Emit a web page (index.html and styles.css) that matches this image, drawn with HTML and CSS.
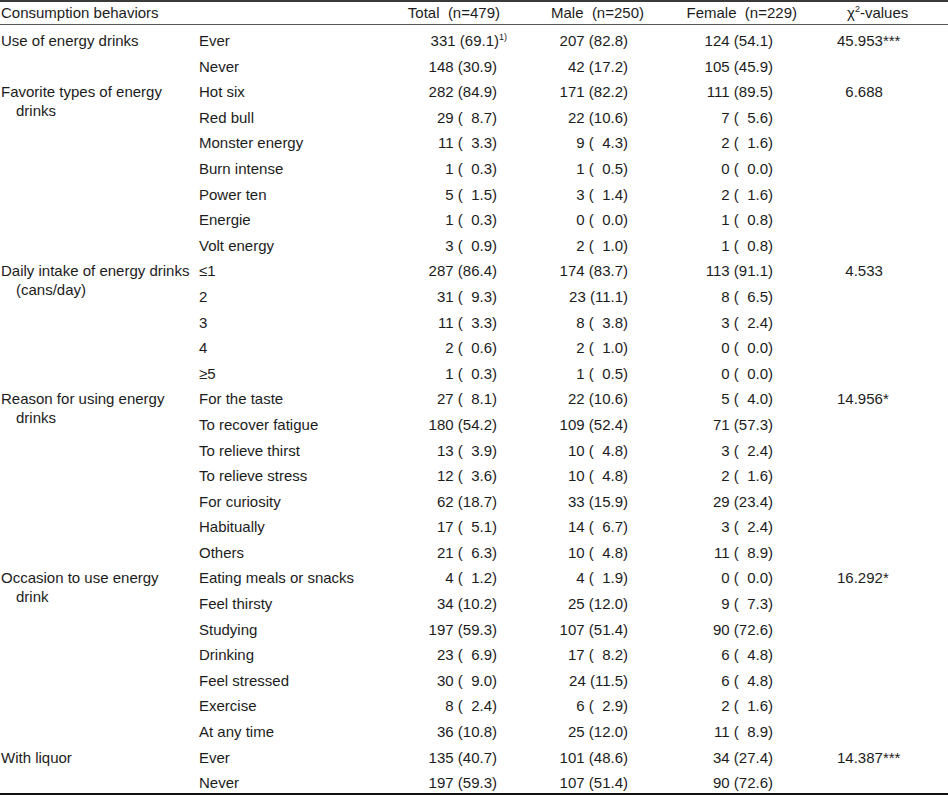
FILE: index.html
```html
<!DOCTYPE html>
<html>
<head>
<meta charset="utf-8">
<link rel="stylesheet" href="styles.css">
</head>
<body>
<table class="tbl">
  <colgroup>
    <col class="c-label"><col class="c-sub"><col class="c-total"><col class="c-male"><col class="c-female"><col class="c-chi">
  </colgroup>
  <thead>
    <tr>
      <th class="h-left" colspan="2">Consumption behaviors</th>
      <th class="h-num h-total">Total&nbsp; (n=479)</th>
      <th class="h-num h-male">Male&nbsp; (n=250)</th>
      <th class="h-num h-female">Female&nbsp; (n=229)</th>
      <th class="h-num h-chi">χ<sup class="sq">2</sup>-values</th>
    </tr>
  </thead>
  <tbody>
    <tr><td class="lab" rowspan="2">Use of energy drinks</td><td class="sub">Ever</td><td class="n t">331 (69.1)<sup class="fn">1)</sup></td><td class="n m">207 (82.8)</td><td class="n f">124 (54.1)</td><td class="chi">45.953***</td></tr>
    <tr class="last"><td class="sub">Never</td><td class="n t">148 (30.9)</td><td class="n m">42 (17.2)</td><td class="n f">105 (45.9)</td><td class="chi"></td></tr>

    <tr><td class="lab" rowspan="7">Favorite types of energy drinks</td><td class="sub">Hot six</td><td class="n t">282 (84.9)</td><td class="n m">171 (82.2)</td><td class="n f">111 (89.5)</td><td class="chi">&#8199;6.688</td></tr>
    <tr><td class="sub">Red bull</td><td class="n t">29 (&#8199;8.7)</td><td class="n m">22 (10.6)</td><td class="n f">7 (&#8199;5.6)</td><td class="chi"></td></tr>
    <tr><td class="sub">Monster energy</td><td class="n t">11 (&#8199;3.3)</td><td class="n m">9 (&#8199;4.3)</td><td class="n f">2 (&#8199;1.6)</td><td class="chi"></td></tr>
    <tr><td class="sub">Burn intense</td><td class="n t">1 (&#8199;0.3)</td><td class="n m">1 (&#8199;0.5)</td><td class="n f">0 (&#8199;0.0)</td><td class="chi"></td></tr>
    <tr><td class="sub">Power ten</td><td class="n t">5 (&#8199;1.5)</td><td class="n m">3 (&#8199;1.4)</td><td class="n f">2 (&#8199;1.6)</td><td class="chi"></td></tr>
    <tr><td class="sub">Energie</td><td class="n t">1 (&#8199;0.3)</td><td class="n m">0 (&#8199;0.0)</td><td class="n f">1 (&#8199;0.8)</td><td class="chi"></td></tr>
    <tr><td class="sub">Volt energy</td><td class="n t">3 (&#8199;0.9)</td><td class="n m">2 (&#8199;1.0)</td><td class="n f">1 (&#8199;0.8)</td><td class="chi"></td></tr>

    <tr><td class="lab" rowspan="5">Daily intake of energy drinks (cans/day)</td><td class="sub">≤1</td><td class="n t">287 (86.4)</td><td class="n m">174 (83.7)</td><td class="n f">113 (91.1)</td><td class="chi">&#8199;4.533</td></tr>
    <tr><td class="sub">2</td><td class="n t">31 (&#8199;9.3)</td><td class="n m">23 (11.1)</td><td class="n f">8 (&#8199;6.5)</td><td class="chi"></td></tr>
    <tr><td class="sub">3</td><td class="n t">11 (&#8199;3.3)</td><td class="n m">8 (&#8199;3.8)</td><td class="n f">3 (&#8199;2.4)</td><td class="chi"></td></tr>
    <tr><td class="sub">4</td><td class="n t">2 (&#8199;0.6)</td><td class="n m">2 (&#8199;1.0)</td><td class="n f">0 (&#8199;0.0)</td><td class="chi"></td></tr>
    <tr><td class="sub">≥5</td><td class="n t">1 (&#8199;0.3)</td><td class="n m">1 (&#8199;0.5)</td><td class="n f">0 (&#8199;0.0)</td><td class="chi"></td></tr>

    <tr><td class="lab" rowspan="7">Reason for using energy drinks</td><td class="sub">For the taste</td><td class="n t">27 (&#8199;8.1)</td><td class="n m">22 (10.6)</td><td class="n f">5 (&#8199;4.0)</td><td class="chi">14.956*</td></tr>
    <tr><td class="sub">To recover fatigue</td><td class="n t">180 (54.2)</td><td class="n m">109 (52.4)</td><td class="n f">71 (57.3)</td><td class="chi"></td></tr>
    <tr><td class="sub">To relieve thirst</td><td class="n t">13 (&#8199;3.9)</td><td class="n m">10 (&#8199;4.8)</td><td class="n f">3 (&#8199;2.4)</td><td class="chi"></td></tr>
    <tr><td class="sub">To relieve stress</td><td class="n t">12 (&#8199;3.6)</td><td class="n m">10 (&#8199;4.8)</td><td class="n f">2 (&#8199;1.6)</td><td class="chi"></td></tr>
    <tr><td class="sub">For curiosity</td><td class="n t">62 (18.7)</td><td class="n m">33 (15.9)</td><td class="n f">29 (23.4)</td><td class="chi"></td></tr>
    <tr><td class="sub">Habitually</td><td class="n t">17 (&#8199;5.1)</td><td class="n m">14 (&#8199;6.7)</td><td class="n f">3 (&#8199;2.4)</td><td class="chi"></td></tr>
    <tr><td class="sub">Others</td><td class="n t">21 (&#8199;6.3)</td><td class="n m">10 (&#8199;4.8)</td><td class="n f">11 (&#8199;8.9)</td><td class="chi"></td></tr>

    <tr><td class="lab" rowspan="7">Occasion to use energy drink</td><td class="sub">Eating meals or snacks</td><td class="n t">4 (&#8199;1.2)</td><td class="n m">4 (&#8199;1.9)</td><td class="n f">0 (&#8199;0.0)</td><td class="chi">16.292*</td></tr>
    <tr><td class="sub">Feel thirsty</td><td class="n t">34 (10.2)</td><td class="n m">25 (12.0)</td><td class="n f">9 (&#8199;7.3)</td><td class="chi"></td></tr>
    <tr><td class="sub">Studying</td><td class="n t">197 (59.3)</td><td class="n m">107 (51.4)</td><td class="n f">90 (72.6)</td><td class="chi"></td></tr>
    <tr><td class="sub">Drinking</td><td class="n t">23 (&#8199;6.9)</td><td class="n m">17 (&#8199;8.2)</td><td class="n f">6 (&#8199;4.8)</td><td class="chi"></td></tr>
    <tr><td class="sub">Feel stressed</td><td class="n t">30 (&#8199;9.0)</td><td class="n m">24 (11.5)</td><td class="n f">6 (&#8199;4.8)</td><td class="chi"></td></tr>
    <tr><td class="sub">Exercise</td><td class="n t">8 (&#8199;2.4)</td><td class="n m">6 (&#8199;2.9)</td><td class="n f">2 (&#8199;1.6)</td><td class="chi"></td></tr>
    <tr><td class="sub">At any time</td><td class="n t">36 (10.8)</td><td class="n m">25 (12.0)</td><td class="n f">11 (&#8199;8.9)</td><td class="chi"></td></tr>

    <tr><td class="lab" rowspan="2">With liquor</td><td class="sub">Ever</td><td class="n t">135 (40.7)</td><td class="n m">101 (48.6)</td><td class="n f">34 (27.4)</td><td class="chi">14.387***</td></tr>
    <tr><td class="sub">Never</td><td class="n t">197 (59.3)</td><td class="n m">107 (51.4)</td><td class="n f">90 (72.6)</td><td class="chi"></td></tr>
  </tbody>
</table>
</body>
</html>
```

FILE: styles.css
```css
html, body {
  margin: 0;
  padding: 0;
  background: #ffffff;
}

.tbl {
  width: 948px;
  table-layout: fixed;
  border-collapse: collapse;
  font-family: "Liberation Sans", Arial, sans-serif;
  font-size: 15px;
  color: #1c1c1c;
  border-top: 2px solid #3a3a3a;
  border-bottom: 2px solid #111111;
}

.c-label { width: 197px; }
.c-sub { width: 183px; }
.c-total { width: 140px; }
.c-male { width: 145px; }
.c-female { width: 140px; }
.c-chi { width: 143px; }

.tbl th {
  font-weight: normal;
  height: 22px;
  padding: 0;
  line-height: 22px;
  vertical-align: middle;
  border-bottom: 1px solid #555555;
  white-space: nowrap;
}

.h-left { text-align: left; padding-left: 1px !important; }
.h-num { text-align: center; }
.h-total { padding-right: 20px !important; text-align: right; }
.h-male { text-align: right; padding-right: 21px !important; }
.h-female { text-align: right; padding-right: 8px !important; }
.h-chi { text-align: left; padding-left: 42px !important; }

.sq { font-size: 9px; vertical-align: 6px; line-height: 0; }

.tbl td {
  padding: 6px 0 0 0;
  height: 19.6px;
  line-height: 19px;
  vertical-align: top;
  white-space: nowrap;
}

.tbl td.lab {
  white-space: normal;
  padding-left: 16px;
  padding-right: 4px;
  text-indent: -15px;
}

.sub { padding-left: 2px !important; }

.n { text-align: right; }
.t { padding-right: 23px !important; }
.m { padding-right: 37px !important; }
.f { padding-right: 32px !important; }
.chi { text-align: left; padding-left: 32px !important; }

.fn {
  font-size: 9px;
  line-height: 0;
  vertical-align: 6px;
  margin-right: -10px;
}
```
